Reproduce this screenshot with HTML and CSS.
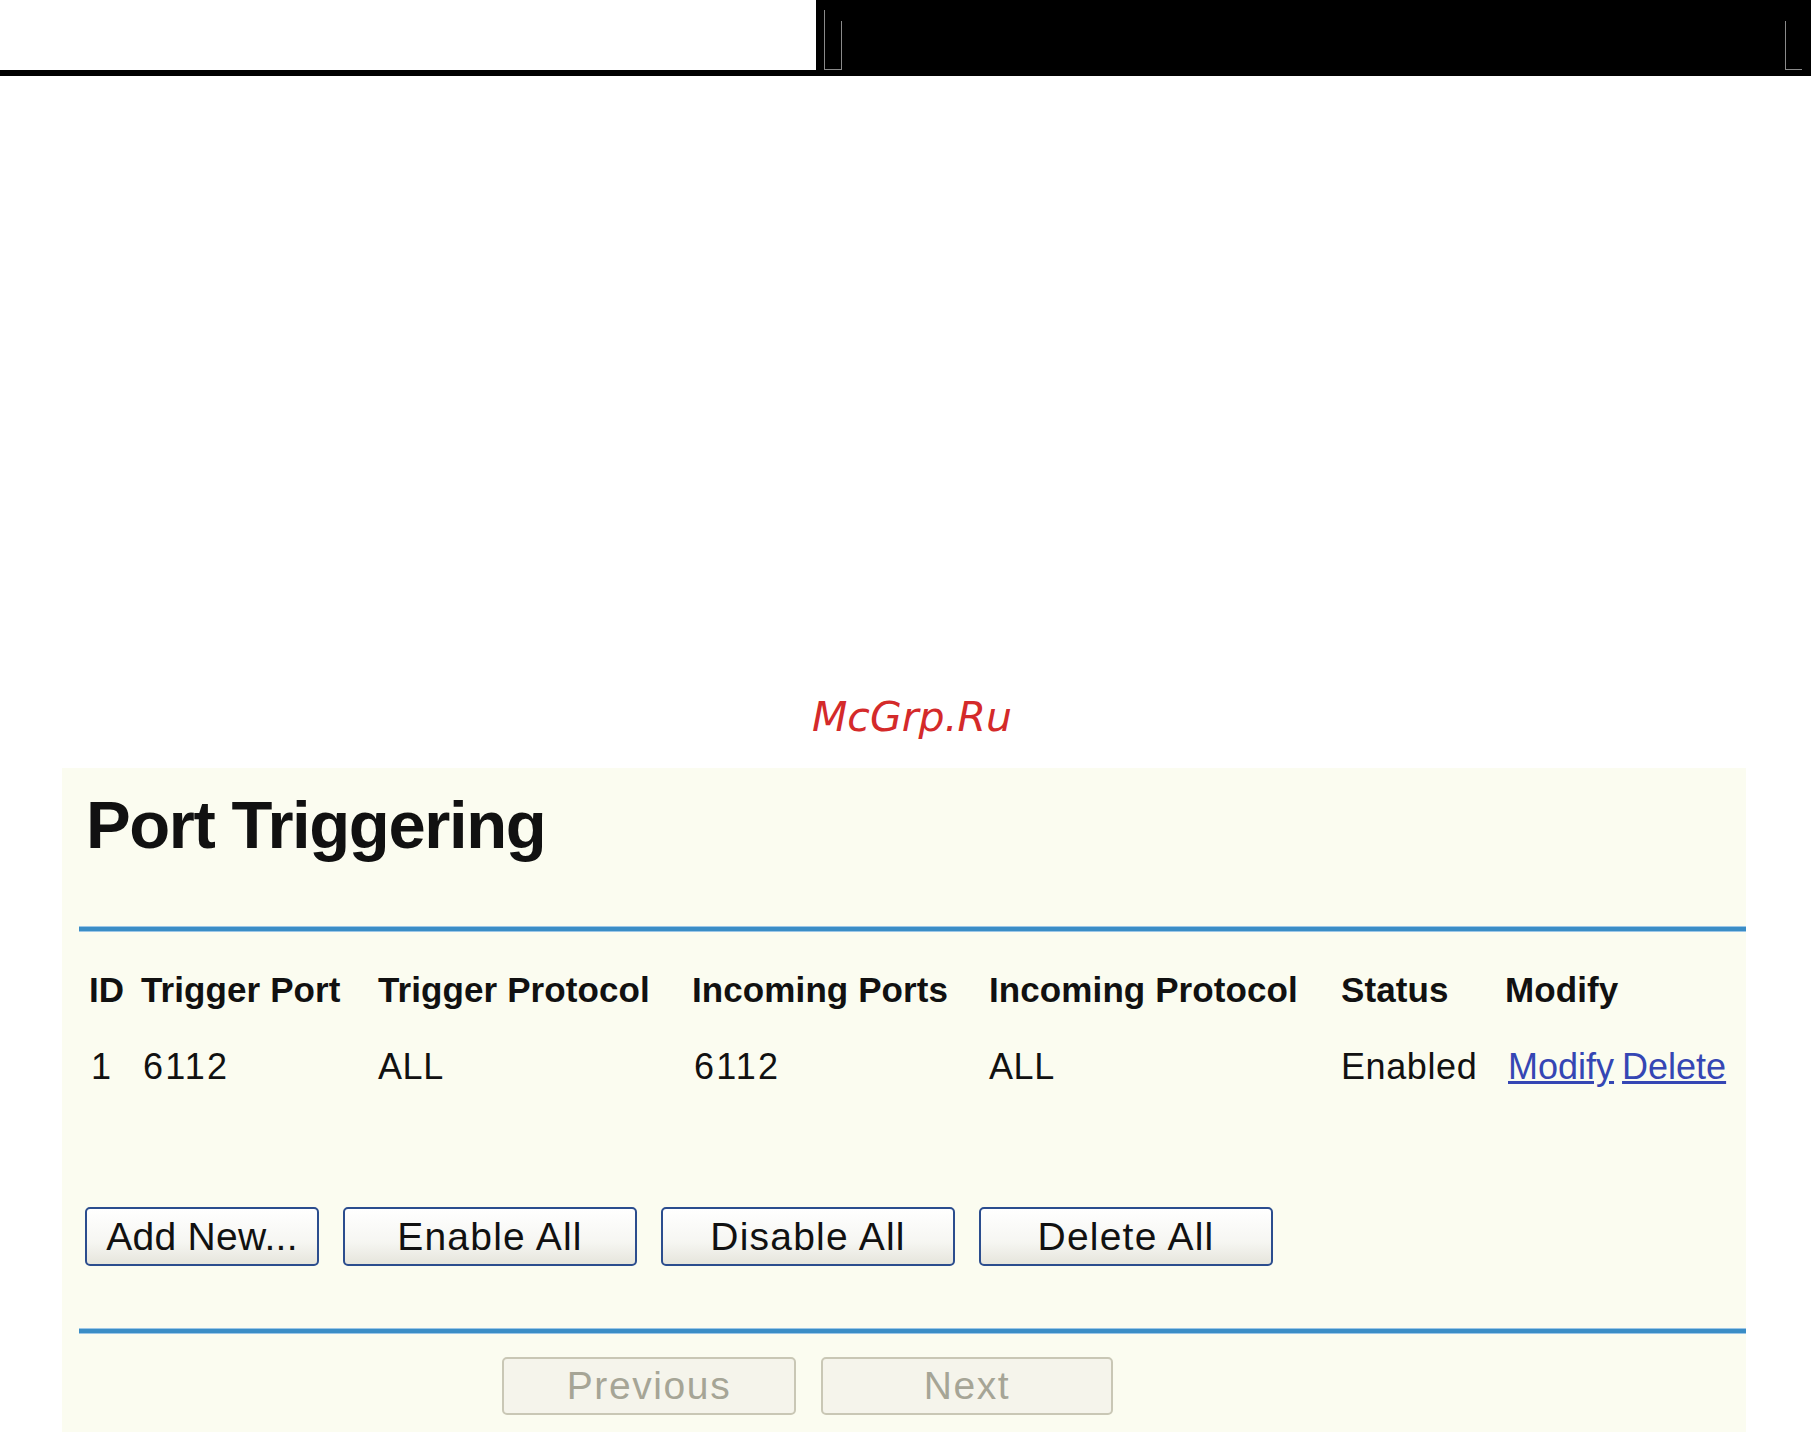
FILE: index.html
```html
<!DOCTYPE html>
<html>
<head>
<meta charset="utf-8">
<title>Port Triggering</title>
<link rel="stylesheet" href="styles.css">
</head>
<body>
<div class="topbar">
  <div class="topbar-left"></div>
  <div class="topbar-right">
    <span class="mark mark-a"></span>
    <span class="mark mark-b"></span>
    <span class="mark mark-c"></span>
    <span class="mark mark-d"></span>
    <span class="mark mark-e"></span>
  </div>
</div>
<div class="watermark">McGrp.Ru</div>
<div class="panel">
  <h1 class="title">Port Triggering</h1>
  <div class="rule"></div>
  <div class="table">
    <div class="row head">
      <div>ID</div><div>Trigger Port</div><div>Trigger Protocol</div><div>Incoming Ports</div><div>Incoming Protocol</div><div>Status</div><div>Modify</div>
    </div>
    <div class="row data">
      <div class="num">1</div><div class="num">6112</div><div>ALL</div><div class="num">6112</div><div>ALL</div><div>Enabled</div><div class="links"><a href="#">Modify</a> <a href="#">Delete</a></div>
    </div>
  </div>
  <div class="actions">
    <button class="btn w-add">Add New...</button>
    <button class="btn w-wide">Enable All</button>
    <button class="btn w-wide">Disable All</button>
    <button class="btn w-wide">Delete All</button>
  </div>
  <div class="rule rule-bottom"></div>
  <div class="pager">
    <button class="btn disabled w-wide" disabled>Previous</button>
    <button class="btn disabled w-next" disabled>Next</button>
  </div>
</div>
</body>
</html>
```
FILE: styles.css
```css
html, body {
  margin: 0;
  padding: 0;
  background: #ffffff;
}
body {
  font-family: "Liberation Sans", Arial, sans-serif;
  color: #111111;
  overflow: hidden;
  height: 1432px;
}
.topbar {
  display: flex;
  height: 76px;
}
.topbar-left {
  width: 816px;
  height: 70px;
  background: #ffffff;
  border-bottom: 6px solid #000000;
}
.topbar-right {
  flex: 1;
  background: #000000;
  position: relative;
}
.mark {
  position: absolute;
  background: #8a8a8a;
}
.mark-a { left: 8px; top: 10px; width: 1px; height: 60px; }
.mark-b { left: 25px; top: 21px; width: 1px; height: 49px; }
.mark-c { left: 8px; top: 69px; width: 18px; height: 1px; }
.mark-d { left: 969px; top: 21px; width: 1px; height: 49px; }
.mark-e { left: 969px; top: 69px; width: 17px; height: 1px; }

.watermark {
  margin-top: 617px;
  padding-left: 812px;
  height: 75px;
  font-family: "DejaVu Sans", sans-serif;
  font-style: italic;
  font-size: 41px;
  line-height: 48px;
  color: #d42a2a;
}
.panel {
  margin-left: 62px;
  width: 1684px;
  height: 664px;
  background: #fbfcf0;
  padding-top: 18px;
  box-sizing: border-box;
}
.title {
  margin: 0 0 0 24px;
  font-size: 67px;
  line-height: 77px;
  font-weight: bold;
  letter-spacing: -1.4px;
  color: #111111;
}
.rule {
  margin: 63px 0 0 17px;
  height: 6px;
  box-sizing: border-box;
  background: #3a8dc6;
  border-top: 1px solid #9cc6e6;
  border-bottom: 1px solid #9cc6e6;
}
.table {
  padding-left: 27px;
  margin-top: 38px;
}
.row {
  display: grid;
  grid-template-columns: 52px 237px 314px 297px 352px 164px auto;
  line-height: 40px;
  white-space: nowrap;
}
.head {
  font-weight: bold;
  font-size: 35px;
  letter-spacing: 0.1px;
}
.data {
  margin-top: 37px;
  font-size: 36px;
  letter-spacing: 0.6px;
}
.data .num {
  padding-left: 2px;
  letter-spacing: 2.2px;
}
.data .links {
  padding-left: 3px;
  letter-spacing: 0;
  word-spacing: -2px;
}
.data a {
  color: #3546b4;
  text-decoration: underline;
}
.actions {
  display: flex;
  gap: 24px;
  margin: 120px 0 0 23px;
}
.btn {
  height: 59px;
  box-sizing: border-box;
  border: 2px solid #2b4d8e;
  border-radius: 5px;
  background: linear-gradient(#ffffff, #f6f6f2 60%, #e6e5dc);
  font-family: "Liberation Sans", Arial, sans-serif;
  font-size: 39px;
  letter-spacing: 1.2px;
  color: #111111;
  padding: 0;
  display: flex;
  align-items: center;
  justify-content: center;
}
.w-add { width: 234px; letter-spacing: 0.3px; }
.w-wide { width: 294px; }
.w-next { width: 292px; }
.rule-bottom {
  margin-top: 62px;
}
.pager {
  display: flex;
  gap: 25px;
  margin: 23px 0 0 440px;
}
.btn.disabled {
  height: 58px;
  border-color: #c9c7b5;
  background: #f5f4eb;
  color: #a6a596;
  letter-spacing: 1.6px;
}
```
